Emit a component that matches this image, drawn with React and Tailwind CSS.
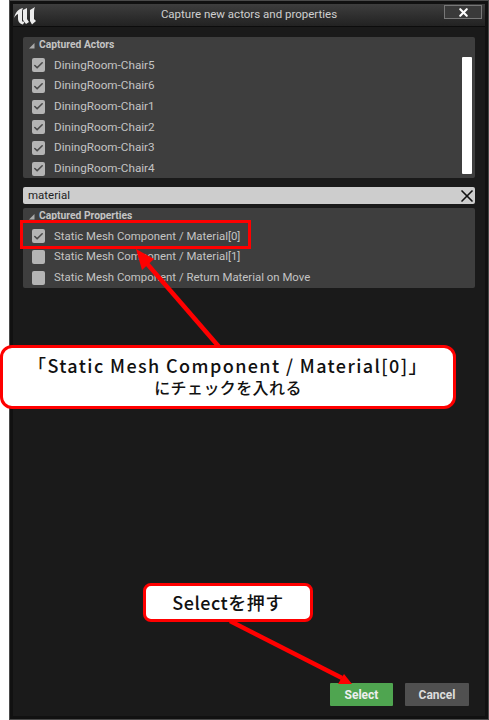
import { Check, X } from 'lucide-react';

const actors = ['DiningRoom-Chair5', 'DiningRoom-Chair6', 'DiningRoom-Chair1', 'DiningRoom-Chair2', 'DiningRoom-Chair3', 'DiningRoom-Chair4'];
const properties = [
  { text: 'Static Mesh Component / Material[0]', checked: true },
  { text: 'Static Mesh Component / Material[1]', checked: false },
  { text: 'Static Mesh Component / Return Material on Move', checked: false },
];

const uiFont = "font-['Roboto',sans-serif]";
const noteFont = "font-['Noto_Sans_CJK_JP','Noto_Sans',sans-serif]";

const Row = ({ text, checked, textClass }) => (
  <div className="flex h-[20.7px] items-center gap-[9px] pl-[9px]">
    <div className="flex h-[14px] w-[13px] items-center justify-center rounded-[2px] bg-[#b4b4b4]">
      {checked && <Check size={11} strokeWidth={3.5} className="text-[#4a4a4a]" />}
    </div>
    <span className={`${textClass} text-[#c4c4c4]`}>{text}</span>
  </div>
);

const Header = ({ text }) => (
  <div className="flex h-[18px] items-center gap-[4px] pb-[2px] pl-[5px]">
    <svg width="7" height="7" viewBox="0 0 7 7"><path d="M6.5 1 V6.5 H1 Z" fill="#aaaaaa" /></svg>
    <span className="text-[10.3px] font-bold text-[#c4c4c4]">{text}</span>
  </div>
);

export default function App() {
  return (
    <div className={`relative h-[720px] w-[489px] overflow-hidden bg-white ${uiFont}`}>
      {/* Dialog window */}
      <div className="ml-[9px] h-[720px] w-[480px] border border-[#4a4a4a]">
        <div className="flex h-full flex-col border-[3px] border-[#111111] bg-[#1a1a1a]">
          <div className="flex h-[23px] shrink-0 items-center border-b border-[#0c0c0c] bg-gradient-to-b from-[#3e3e3e] to-[#222222] pl-[1px]">
            <svg width="22" height="19" viewBox="0 0 22 19" className="shrink-0">
              <path d="M0 12 C1 7 4 3 9 2 C8 4 8 5 8 7 V14 C8 16 9 16 11 15 L9 18.5 C6 18 4 16 4 12 V8 C2 9 1 10 0 12 Z" fill="#ececec" />
              <path d="M9 4 L13 2 V13 L15 16 L12 18 L9 14 Z" fill="#ececec" />
              <path d="M16 4 L21 1 C20 3 20 5 20 8 V13 L22 15 L18 18.5 L16 15 Z" fill="#ececec" />
            </svg>
            <div className="flex-1 pl-[18px] text-center text-[11.5px] text-[#cfcfcf]">Capture new actors and properties</div>
            <div className="mr-[3px] mt-[1px] flex h-[14px] w-[38px] shrink-0 items-center justify-center self-start border border-[#777777] bg-[#3a3a3a]">
              <X size={13} strokeWidth={4} className="text-white" />
            </div>
          </div>

          <div className="flex flex-1 flex-col px-[10px] pt-[10px]">
            <div className="relative h-[141px] rounded-[2px] bg-[#3e3e3e]">
              <Header text="Captured Actors" />
              <div>
                {actors.map((a) => <Row key={a} text={a} checked textClass="text-[11.7px]" />)}
              </div>
              <div className="absolute right-[3px] top-[20px] h-[117px] w-[10px] rounded-[1px] bg-white" />
            </div>

            <div className="mt-[9px] flex h-[17px] items-center justify-between rounded-[2px] bg-[#cdcdcd] pl-[5px] text-[11.5px] text-[#222222]">
              <span>material</span>
              <X size={20} strokeWidth={2} className="-mr-[2px] text-[#111111]" />
            </div>

            <div className="mt-[4px] h-[80px] rounded-[2px] bg-[#3e3e3e]">
              <Header text="Captured Properties" />
              <div>
                {properties.map((p) => <Row key={p.text} text={p.text} checked={p.checked} textClass="text-[11.4px]" />)}
              </div>
            </div>

            <div className="mb-[10px] mr-[6px] mt-auto flex justify-end gap-[12px]">
              <div className="flex h-[23px] w-[63px] items-center justify-center rounded-[1px] bg-[#4fa550] text-[12px] font-bold text-[#eeeeee]">Select</div>
              <div className="flex h-[23px] w-[64px] items-center justify-center rounded-[1px] bg-[#505050] text-[12px] font-bold text-[#dddddd]">Cancel</div>
            </div>
          </div>
        </div>
      </div>

      {/* Red highlight box */}
      <div className="absolute left-[20px] top-[220px] h-[29px] w-[231px] border-[3px] border-[#ff0000]" />

      {/* Arrows */}
      <svg className="absolute left-0 top-0" width="489" height="720" viewBox="0 0 489 720">
        <path d="M220 348 L143 259" stroke="#ff0000" strokeWidth="4.5" fill="none" />
        <path d="M136 249 L154 259 L142 270 Z" fill="#ff0000" />
        <path d="M230 621 L342 678" stroke="#ff0000" strokeWidth="4.5" fill="none" />
        <path d="M352 684 L344 674 L338 684 Z" fill="#ff0000" />
      </svg>

      {/* Callouts */}
      <div className={`absolute left-0 top-[345px] flex h-[64px] w-[456px] flex-col items-center rounded-[12px] border-[3px] border-[#ff0000] bg-white pt-[6px] font-medium text-[#111111] ${noteFont}`}>
        <div className="text-[18px] leading-[22px] tracking-[1.4px]">「Static Mesh Component / Material[0]」</div>
        <div className="text-[16px] leading-[22px] tracking-[0.4px]">にチェックを入れる</div>
      </div>
      <div className={`absolute left-[143px] top-[583px] flex h-[39px] w-[170px] items-center justify-center rounded-[8px] border-[3px] border-[#ff0000] bg-white text-[18px] font-medium tracking-[0.5px] text-[#111111] ${noteFont}`}>
        Selectを押す
      </div>
    </div>
  );
}
